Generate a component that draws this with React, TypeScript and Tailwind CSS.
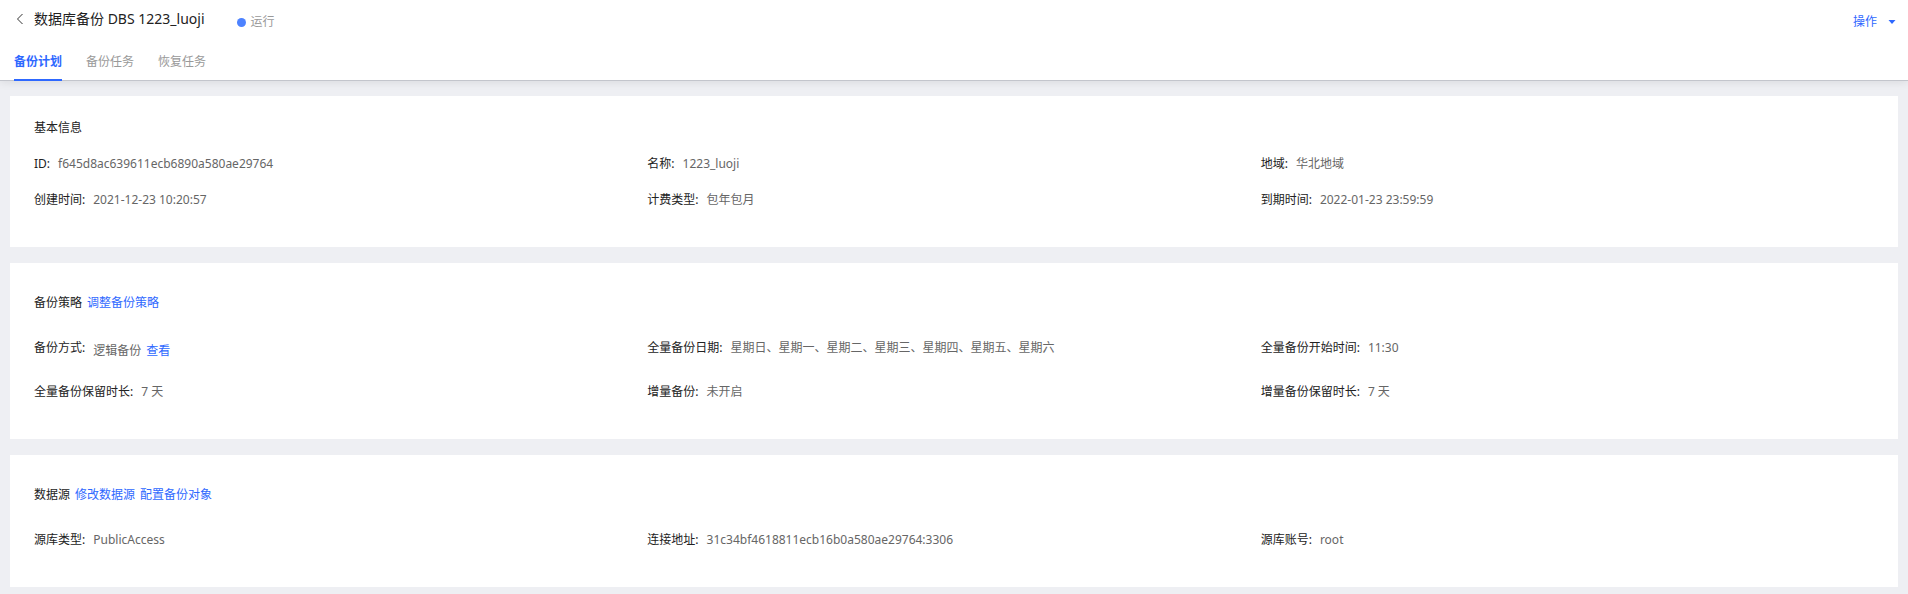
import type { ReactNode } from "react";

type Item = { label: string; value: ReactNode };

const basicInfo: Item[] = [
  { label: "ID", value: "f645d8ac639611ecb6890a580ae29764" },
  { label: "名称", value: "1223_luoji" },
  { label: "地域", value: "华北地域" },
  { label: "创建时间", value: "2021-12-23 10:20:57" },
  { label: "计费类型", value: "包年包月" },
  { label: "到期时间", value: "2022-01-23 23:59:59" },
];

const strategy: Item[] = [
  {
    label: "备份方式",
    value: (
      <span className="flex gap-[5px] leading-[26px]">
        逻辑备份 <TextLink>查看</TextLink>
      </span>
    ),
  },
  { label: "全量备份日期", value: "星期日、星期一、星期二、星期三、星期四、星期五、星期六" },
  { label: "全量备份开始时间", value: "11:30" },
  { label: "全量备份保留时长", value: "7 天" },
  { label: "增量备份", value: "未开启" },
  { label: "增量备份保留时长", value: "7 天" },
];

const dataSource: Item[] = [
  { label: "源库类型", value: "PublicAccess" },
  { label: "连接地址", value: "31c34bf4618811ecb16b0a580ae29764:3306" },
  { label: "源库账号", value: "root" },
];

const tabs = ["备份计划", "备份任务", "恢复任务"];

function TextLink({ children }: { children: ReactNode }) {
  return (
    <a href="#" className="text-[#2e68ff] hover:underline">
      {children}
    </a>
  );
}

function Card({
  title,
  links = [],
  items,
  compact = false,
}: {
  title: string;
  links?: string[];
  items: Item[];
  compact?: boolean;
}) {
  return (
    <section className={compact ? "bg-white px-6 pt-[22px] pb-[29px]" : "bg-white px-6 pt-[30px] pb-[25px]"}>
      <div className="flex gap-[5px] leading-5">
        <h2 className="text-[#222222]">{title}</h2>
        {links.map((link) => (
          <TextLink key={link}>{link}</TextLink>
        ))}
      </div>
      <dl className={compact ? "mt-2 grid grid-cols-3" : "mt-[13px] grid grid-cols-3"}>
        {items.map((item) => (
          <div
            key={item.label}
            className={compact ? "flex h-9 items-start gap-2 pt-2 leading-5" : "flex h-11 items-start gap-2 pt-3 leading-5"}
          >
            <dt className="shrink-0 text-[#222222]">{item.label}:</dt>
            <dd className="text-[#666666]">{item.value}</dd>
          </div>
        ))}
      </dl>
    </section>
  );
}

export default function App() {
  return (
    <div className="min-h-screen bg-[#eeeff3] font-['Noto_Sans','Noto_Sans_CJK_SC',sans-serif] text-xs">
      <header className="relative border-b border-[#c3c5cc] bg-white shadow-[0_2px_8px_rgba(0,0,0,0.08)]">
        <div className="flex h-11 items-start pr-3 pl-4">
          <button type="button" aria-label="返回" className="mt-3 flex h-3.5 w-[18px] items-center">
            <svg width="8" height="12" viewBox="0 0 8 12" fill="none" stroke="#333333" strokeWidth="1">
              <path d="M6.5 1L1.5 6l5 5" />
            </svg>
          </button>
          <h1 className="pt-2 text-sm leading-[22px] text-[#222222]">数据库备份 DBS 1223_luoji</h1>
          <div className="ml-8 flex items-center gap-[5px] pt-3 leading-5 text-[#999999]">
            <span className="size-[9px] rounded-full bg-[#4d82ff]" />
            运行
          </div>
          <button type="button" className="ml-auto flex items-center gap-[11px] pt-3 leading-5 text-[#2e68ff]">
            操作
            <svg width="8" height="4" viewBox="0 0 8 4" fill="currentColor">
              <path d="M0.5 0h7L4 4z" />
            </svg>
          </button>
        </div>
        <div role="tablist" className="-mb-px flex gap-6 pl-3.5">
          {tabs.map((tab, index) => (
            <button
              key={tab}
              type="button"
              role="tab"
              aria-selected={index === 0}
              className={
                index === 0
                  ? "h-[37px] border-b-2 border-[#2e68ff] font-bold text-[#2e68ff]"
                  : "h-[37px] border-b-2 border-transparent text-[#999999]"
              }
            >
              {tab}
            </button>
          ))}
        </div>
      </header>
      <main className="flex flex-col gap-4 px-2.5 pt-[15px] pb-[7px]">
        <Card title="基本信息" items={basicInfo} compact />
        <Card title="备份策略" links={["调整备份策略"]} items={strategy} />
        <Card title="数据源" links={["修改数据源", "配置备份对象"]} items={dataSource} />
      </main>
    </div>
  );
}
